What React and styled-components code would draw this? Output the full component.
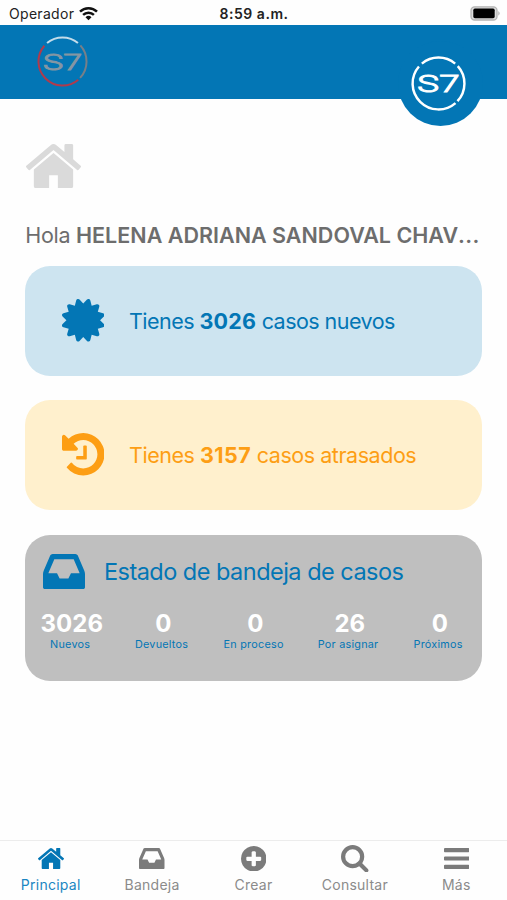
import React from 'react';
import styled, { createGlobalStyle } from 'styled-components';

const BLUE = '#0376b5';
const ORANGE = '#fd9e14';
const GRAY = '#7b7b7b';

const GlobalStyle = createGlobalStyle`
  * { box-sizing: border-box; }
  body { margin: 0; background: #fff; font-family: Inter, "Liberation Sans", sans-serif; }
`;

const Screen = styled.div`
  display: flex;
  flex-direction: column;
  width: 507px;
  height: 900px;
  overflow: hidden;
  background: #fefefe;
`;

const StatusBar = styled.div`
  display: grid;
  grid-template-columns: 1fr auto 1fr;
  align-items: center;
  height: 25px;
  padding: 2px 6px 0 9px;
  color: #222;
  font-size: 14px;
`;

const Carrier = styled.div`
  display: flex;
  align-items: center;
  gap: 5px;
  letter-spacing: 0.3px;
`;

const Clock = styled.div`
  margin-right: 2px;
  font-size: 14px;
  font-weight: 600;
  letter-spacing: 0.55px;
`;

const Battery = styled.svg`
  justify-self: end;
  display: block;
`;

const Header = styled.header`
  position: relative;
  flex: none;
  height: 73.5px;
  padding: 11.2px 0 0 36.7px;
  background: ${BLUE};
`;

const Badge = styled.div`
  position: absolute;
  top: 15.5px;
  right: 24.5px;
  display: flex;
  align-items: center;
  justify-content: center;
  width: 85px;
  height: 85px;
  padding-right: 3px;
  border-radius: 50%;
  background: ${BLUE};
`;

const LogoSvg = styled.svg`
  display: block;
  width: ${(p) => p.$size}px;
  height: ${(p) => p.$size}px;
`;

const LogoText = styled.text`
  font-family: Roboto, sans-serif;
  font-size: 25px;
  font-weight: 300;
  stroke-width: 1px;
`;

const Main = styled.main`
  flex: 1;
  padding: 45px 24.7px 0 25.3px;
`;

const Icon = styled.svg`
  display: block;
  flex: none;
  width: ${(p) => p.$w}px;
  height: ${(p) => p.$h}px;
  fill: ${(p) => p.$color || 'currentColor'};
`;

const PageIcon = styled.div`
  padding-left: 0.9px;
`;

const Greeting = styled.h1`
  margin: 32.5px 0 0;
  height: 28px;
  line-height: 28px;
  color: #6d6d6d;
  font-size: 21.5px;
  font-weight: 400;
  letter-spacing: -0.3px;
  white-space: nowrap;
`;

const Strong = styled.strong`
  font-weight: ${(p) => p.$weight || 700};
  letter-spacing: ${(p) => p.$spacing}px;
`;

const Ellipsis = styled.span`
  letter-spacing: 0.4px;
`;

const Card = styled.section`
  display: flex;
  align-items: center;
  gap: 24.5px;
  height: 110px;
  margin-top: ${(p) => p.$top}px;
  padding-left: 36.7px;
  border-radius: 25px;
  background: ${(p) => p.$bg};
  color: ${(p) => p.$color};
`;

const CardText = styled.p`
  margin: 0;
  font-size: 21.5px;
  letter-spacing: ${(p) => p.$spacing}px;
  white-space: nowrap;
`;

const TrayCard = styled.section`
  height: 146.5px;
  margin-top: 25px;
  padding-top: 18.8px;
  border-radius: 25px;
  background: #bfbfbf;
  color: ${BLUE};
`;

const TrayHead = styled.div`
  display: flex;
  align-items: center;
  gap: 18.6px;
  height: 36px;
  padding-left: 18px;
`;

const TrayTitle = styled.h2`
  margin: 0;
  font-size: 23.5px;
  font-weight: 400;
  letter-spacing: -0.52px;
  white-space: nowrap;
`;

const Stats = styled.div`
  display: grid;
  grid-template-columns: 93px 90px 94px 95px 85px;
  margin-top: 21px;
`;

const Stat = styled.div`
  display: flex;
  flex-direction: column;
  align-items: center;
`;

const StatValue = styled.span`
  color: #fff;
  font-size: 24px;
  font-weight: 700;
  line-height: 28px;
`;

const StatLabel = styled.span`
  margin-right: 3.4px;
  font-size: 10.8px;
  line-height: 14px;
  letter-spacing: 0.25px;
  white-space: nowrap;
`;

const TabBar = styled.nav`
  display: grid;
  grid-template-columns: repeat(5, 1fr);
  flex: none;
  height: 60px;
  border-top: 1px solid #ececec;
`;

const Tab = styled.div`
  display: flex;
  flex-direction: column;
  align-items: center;
  color: ${(p) => (p.$active ? BLUE : GRAY)};
`;

const TabIconBox = styled.div`
  display: flex;
  align-items: center;
  justify-content: center;
  height: 35px;
`;

const TabLabel = styled.span`
  color: ${(p) => (p.$active ? '#1a86c2' : '#8b8b8b')};
  font-size: 14px;
  line-height: 18px;
  letter-spacing: 0.25px;
`;

const SHAPES = {
  home: {
    box: '26 253 1612 1283',
    d: 'M1408 992v480q0 26-19 45t-45 19h-384v-384h-256v384h-384q-26 0-45-19t-19-45v-480q0-1 .5-3t.5-3l575-474 575 474q1 2 1 6zm223-69l-62 74q-8 9-21 11h-3q-13 0-21-7l-692-577-692 577q-12 8-24 7-13-2-21-11l-62-74q-8-10-7-23.5t11-21.5l719-599q32-26 76-26t76 26l244 204v-195q0-14 9-23t23-9h192q14 0 23 9t9 23v408l219 182q10 8 11 21.5t-7 23.5z',
  },
  certificate: {
    box: '0 128 1536 1536',
    d: 'M1376 896l138 135q30 28 20 70-12 41-52 51l-188 48 53 186q12 41-19 70-29 31-70 19l-186-53-48 188q-10 40-51 52-12 2-19 2-31 0-51-22l-135-138-135 138q-28 30-70 20-41-11-51-52l-48-188-186 53q-41 12-70-19-31-29-19-70l53-186-188-48q-40-10-52-51-10-42 20-70l138-135-138-135q-30-28-20-70 12-41 52-51l188-48-53-186q-12-41 19-70 29-31 70-19l186 53 48-188q10-41 51-51 41-12 70 19l135 139 135-139q29-30 70-19 41 10 51 51l48 188 186-53q41-12 70 19 31 29 19 70l-53 186 188 48q40 10 52 51 10 42-20 70z',
  },
  history: {
    box: '128 128 1536 1536',
    d: 'M1664 896q0 156-61 298t-164 245-245 164-298 61q-172 0-327-72.5t-264-204.5q-7-10-6.5-22.5t8.5-20.5l137-138q10-9 25-9 16 2 23 12 73 95 179 147t225 52q104 0 198.5-40.5t163.5-109.5 109.5-163.5 40.5-198.5-40.5-198.5-109.5-163.5-163.5-109.5-198.5-40.5q-98 0-188 35.5t-160 101.5l137 138q31 30 14 69-17 40-59 40h-448q-26 0-45-19t-19-45v-448q0-42 40-59 39-17 69 14l130 129q107-101 244.5-156.5t284.5-55.5q156 0 298 61t245 164 164 245 61 298zm-640-288v448q0 14-9 23t-23 9h-320q-14 0-23-9t-9-23v-64q0-14 9-23t23-9h224v-352q0-14 9-23t23-9h64q14 0 23 9t9 23z',
  },
  inbox: {
    box: '128 256 1536 1280',
    d: 'M1151 960h316q-1-3-2.5-8t-2.5-8l-212-496h-708l-212 496q-1 2-2.5 8t-2.5 8h316l95 192h320zm513 30v482q0 26-19 45t-45 19h-1408q-26 0-45-19t-19-45v-482q0-62 25-123l238-552q10-25 36.5-42t52.5-17h832q26 0 52.5 17t36.5 42l238 552q25 61 25 123z',
  },
  plus: {
    box: '128 128 1536 1536',
    d: 'M1344 960v-128q0-26-19-45t-45-19h-256v-256q0-26-19-45t-45-19h-128q-26 0-45 19t-19 45v256h-256q-26 0-45 19t-19 45v128q0 26 19 45t45 19h256v256q0 26 19 45t45 19h128q26 0 45-19t19-45v-256h256q26 0 45-19t19-45zm320-64q0 209-103 385.5t-279.5 279.5-385.5 103-385.5-103-279.5-279.5-103-385.5 103-385.5 279.5-279.5 385.5-103 385.5 103 279.5 279.5 103 385.5z',
  },
  search: {
    box: '64 128 1664 1664',
    d: 'M1216 832q0-185-131.5-316.5t-316.5-131.5-316.5 131.5-131.5 316.5 131.5 316.5 316.5 131.5 316.5-131.5 131.5-316.5zm512 832q0 52-38 90t-90 38q-54 0-90-38l-343-342q-179 124-399 124-143 0-273.5-55.5t-225-150-150-225-55.5-273.5 55.5-273.5 150-225 225-150 273.5-55.5 273.5 55.5 225 150 150 225 55.5 273.5q0 220-124 399l343 343q37 37 37 90z',
  },
  bars: {
    box: '128 256 1536 1280',
    d: 'M1664 1344v128q0 26-19 45t-45 19h-1408q-26 0-45-19t-19-45v-128q0-26 19-45t45-19h1408q26 0 45 19t19 45zm0-512v128q0 26-19 45t-45 19h-1408q-26 0-45-19t-19-45v-128q0-26 19-45t45-19h1408q26 0 45 19t19 45zm0-512v128q0 26-19 45t-45 19h-1408q-26 0-45-19t-19-45v-128q0-26 19-45t45-19h1408q26 0 45 19t19 45z',
  },
};

function Glyph({ name, w, h, color }) {
  const shape = SHAPES[name];
  return (
    <Icon viewBox={shape.box} $w={w} $h={h} $color={color} preserveAspectRatio="none" aria-hidden="true">
      <path d={shape.d} />
    </Icon>
  );
}

/* Arc on a circle centred in a 56-unit box, angles in degrees clockwise from 3 o'clock. */
function arc(r, from, to) {
  const point = (deg) => {
    const a = (deg * Math.PI) / 180;
    return `${(28 + r * Math.cos(a)).toFixed(2)} ${(28 + r * Math.sin(a)).toFixed(2)}`;
  };
  return `M${point(from)}A${r} ${r} 0 ${to - from > 180 ? 1 : 0} 1 ${point(to)}`;
}

function Logo({ size, top, right, bottom, text, stroke }) {
  return (
    <LogoSvg $size={size} viewBox="0 0 56 56" fill="none" strokeWidth={stroke}>
      <path d={arc(26.4, -130, -50)} stroke={top} />
      <path d={arc(26.4, -42, 43)} stroke={right} />
      <path d={arc(26.4, 49, 221)} stroke={bottom} />
      <LogoText
        x="6.5"
        y="37"
        textLength="43"
        lengthAdjust="spacingAndGlyphs"
        fill={text}
        stroke={text}
      >
        S7
      </LogoText>
    </LogoSvg>
  );
}

const STATS = [
  { value: '3026', label: 'Nuevos' },
  { value: '0', label: 'Devueltos' },
  { value: '0', label: 'En proceso' },
  { value: '26', label: 'Por asignar' },
  { value: '0', label: 'Próximos' },
];

const TABS = [
  { icon: 'home', label: 'Principal', w: 26, h: 21, active: true },
  { icon: 'inbox', label: 'Bandeja', w: 25.5, h: 21 },
  { icon: 'plus', label: 'Crear', w: 25.5, h: 25.5 },
  { icon: 'search', label: 'Consultar', w: 27.5, h: 27.5 },
  { icon: 'bars', label: 'Más', w: 25.5, h: 21 },
];

export default function App() {
  return (
    <Screen>
      <GlobalStyle />
      <StatusBar>
        <Carrier>
          Operador
          <svg width="19" height="14" viewBox="0 0 19 14" fill="none" stroke="#111" strokeWidth="2.5">
            <path d="M1 4.7a12.2 12.2 0 0 1 17 0" />
            <path d="M4.1 7.8a7.8 7.8 0 0 1 10.8 0" />
            <path d="M9.5 13.3l-3-3a4.3 4.3 0 0 1 6 0z" fill="#111" stroke="none" />
          </svg>
        </Carrier>
        <Clock>8:59 a.m.</Clock>
        <Battery width="31" height="15" viewBox="0 0 31 15">
          <rect x="1" y="0.8" width="26" height="13.2" rx="3.6" fill="#ddd" stroke="#b4b4b4" strokeWidth="1.3" />
          <rect x="3.3" y="2.6" width="21.4" height="9.6" rx="1.6" fill="#000" />
          <path d="M28.4 5q2.4 2.4 0 4.8z" fill="#aaa" />
        </Battery>
      </StatusBar>
      <Header>
        <Logo size={51} top="#c3dcea" right="#777f88" bottom="#b03a4c" text="#8496a3" stroke={2.2} />
        <Badge>
          <Logo size={55} top="#fff" right="#fff" bottom="#fff" text="#fff" stroke={2.5} />
        </Badge>
      </Header>
      <Main>
        <PageIcon>
          <Glyph name="home" w={55} h={44.5} color="#dadada" />
        </PageIcon>
        <Greeting>
          Hola{' '}
          <Strong $weight={600} $spacing={0.02}>
            HELENA ADRIANA SANDOVAL CHAV<Ellipsis>...</Ellipsis>
          </Strong>
        </Greeting>
        <Card $top={17} $bg="#cde4f0" $color={BLUE}>
          <Glyph name="certificate" w={42.5} h={42.5} />
          <CardText $spacing={-0.54}>
            Tienes <Strong $spacing={0.2}>3026</Strong> casos nuevos
          </CardText>
        </Card>
        <Card $top={24} $bg="#fff0cd" $color={ORANGE}>
          <Glyph name="history" w={42.5} h={42.5} />
          <CardText $spacing={-0.46}>
            Tienes <Strong $spacing={0.45}>3157</Strong> casos atrasados
          </CardText>
        </Card>
        <TrayCard>
          <TrayHead>
            <Glyph name="inbox" w={42} h={35} />
            <TrayTitle>Estado de bandeja de casos</TrayTitle>
          </TrayHead>
          <Stats>
            {STATS.map((s) => (
              <Stat key={s.label}>
                <StatValue>{s.value}</StatValue>
                <StatLabel>{s.label}</StatLabel>
              </Stat>
            ))}
          </Stats>
        </TrayCard>
      </Main>
      <TabBar>
        {TABS.map((t) => (
          <Tab key={t.label} $active={t.active}>
            <TabIconBox>
              <Glyph name={t.icon} w={t.w} h={t.h} />
            </TabIconBox>
            <TabLabel $active={t.active}>{t.label}</TabLabel>
          </Tab>
        ))}
      </TabBar>
    </Screen>
  );
}
